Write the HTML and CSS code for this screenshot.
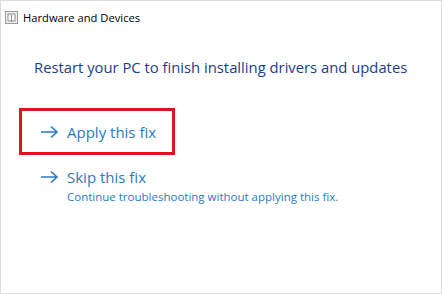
FILE: index.html
```html
<!DOCTYPE html>
<html lang="en">

<head>
    <meta charset="UTF-8">
    <meta name="viewport" content="width=device-width, initial-scale=1.0">
    <title>Hardware and Devices</title>
    <link rel="stylesheet" href="styles.css">
</head>

<body>
    <div class="window">
        <div class="title-bar">
            <svg class="title-icon" width="13" height="13" viewBox="0 0 13 13">
                <rect x="0.5" y="0.5" width="12" height="12" fill="#f2f2f2" stroke="#9a9a9a"/>
                <rect x="3" y="3" width="7" height="7" fill="#fff" stroke="#8c8c8c"/>
                <path d="M6.5 4 V11" stroke="#8c8c8c"/>
            </svg>
            <span class="title-text">Hardware and Devices</span>
        </div>

        <div class="content">
            <h1 class="heading">Restart your PC to finish installing drivers and updates</h1>

            <div class="option highlighted">
                <svg class="arrow" width="19" height="14" viewBox="0 0 19 14">
                    <path d="M1 7 H17 M11 1.5 L17 7 L11 12.5" fill="none" stroke="#2a7ac0" stroke-width="1.6"/>
                </svg>
                <div class="option-text">
                    <div class="option-title">Apply this fix</div>
                </div>
            </div>

            <div class="option">
                <svg class="arrow" width="19" height="14" viewBox="0 0 19 14">
                    <path d="M1 7 H17 M11 1.5 L17 7 L11 12.5" fill="none" stroke="#2a7ac0" stroke-width="1.6"/>
                </svg>
                <div class="option-text">
                    <div class="option-title">Skip this fix</div>
                    <div class="option-desc">Continue troubleshooting without applying this fix.</div>
                </div>
            </div>
        </div>
    </div>
</body>

</html>
```

FILE: styles.css
```css
body {
    margin: 0;
    font-family: 'Open Sans', 'Noto Sans', sans-serif;
    background-color: #fff;
}

.window {
    width: 442px;
    height: 294px;
    box-sizing: border-box;
    border: 1px solid #dcdcdc;
    background-color: #fff;
}

.title-bar {
    display: flex;
    align-items: center;
    height: 32px;
    padding-left: 4px;
    padding-top: 1px;
    box-sizing: border-box;
}

.title-icon {
    margin-right: 5px;
}

.title-text {
    font-size: 11.2px;
    color: #000;
}

.content {
    padding-left: 18px;
}

.heading {
    font-size: 14.8px;
    font-weight: normal;
    color: #1c3d88;
    margin: 24px 0 0 15px;
}

.option {
    display: flex;
    align-items: flex-start;
    padding-left: 21px;
    color: #2a7ac0;
}

.option.highlighted {
    width: 132px;
    height: 41px;
    margin-top: 31px;
    padding-left: 18px;
    align-items: center;
    border: 3px solid #e0121e;
    box-sizing: content-box;
}

.option:not(.highlighted) {
    margin-top: 12px;
}

.arrow {
    flex: none;
    margin: 3px 8px 0 0;
}

.highlighted .arrow {
    margin-top: 0;
}

.option-title {
    font-size: 15px;
    line-height: 20px;
}

.option-desc {
    font-size: 11.5px;
    line-height: 18px;
    margin-top: 1px;
}
```
